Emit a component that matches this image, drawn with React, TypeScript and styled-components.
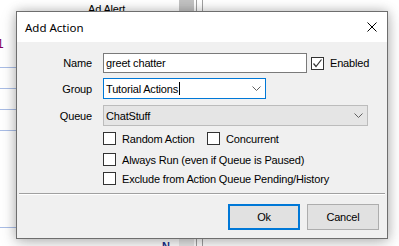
import styled, { createGlobalStyle } from 'styled-components';

const GlobalStyle = createGlobalStyle`
  html, body {
    margin: 0;
    padding: 0;
    background: #ffffff;
    overflow: hidden;
  }
  body {
    font-family: "Liberation Sans", Arial, sans-serif;
    font-size: 11px;
    letter-spacing: -0.17px;
    color: #000;
  }
`;

// Background window behind the dialog
const Page = styled.div`
  position: relative;
  width: 399px;
  height: 246px;
  overflow: hidden;
  display: flex;
  background: #fff;
`;

const ListPane = styled.div`
  width: 179px;
  display: flex;
  flex-direction: column;
`;

const ListRow = styled.div<{ $h: number; $line?: boolean }>`
  height: ${(p) => p.$h}px;
  box-sizing: border-box;
  flex-shrink: 0;
  border-bottom: ${(p) => (p.$line ? '1px solid #a9bde6' : 'none')};
`;

const HeaderText = styled.div`
  padding: 3px 0 0 88px;
  white-space: nowrap;
`;

const RowNumber = styled.div`
  margin: 22px 0 0 -3px;
  color: #800060;
  font-size: 12px;
`;

const BottomText = styled.div`
  padding: 12px 0 0 162px;
  color: #1a2f8a;
  font-weight: bold;
`;

const ScrollTrack = styled.div`
  width: 15px;
  background: #e8e8e8;
  display: flex;
  flex-direction: column;
`;

const ScrollThumb = styled.div`
  height: 120px;
  background: #c2c2c2;
`;

const Splitter = styled.div`
  width: 5px;
  margin-left: 2px;
  border-left: 1px solid #a0a0a0;
  border-right: 1px solid #a0a0a0;
`;

// Dialog
const Dialog = styled.div`
  position: absolute;
  left: 16px;
  top: 11px;
  width: 372px;
  height: 228px;
  box-sizing: border-box;
  border: 1px solid #6e6e6e;
  background: #f0f0f0;
  box-shadow: 0 0 10px rgba(0, 0, 0, 0.22), 0 4px 16px rgba(0, 0, 0, 0.18);
  display: flex;
  flex-direction: column;
`;

const TitleBar = styled.div`
  height: 30px;
  background: #fff;
  display: flex;
  align-items: center;
  justify-content: space-between;
  padding: 0 10px 0 8px;
  flex-shrink: 0;
`;

const Title = styled.span`
  font-family: "Noto Sans", "Open Sans", sans-serif;
  font-size: 11.5px;
  letter-spacing: 0;
  color: #000;
  margin-top: 1px;
`;

const CloseButton = styled.div`
  width: 10px;
  height: 10px;
  display: flex;
`;

const Body = styled.div`
  flex: 1;
  display: flex;
  flex-direction: column;
  padding: 11px 2px 0 2px;
`;

const FieldRow = styled.div<{ $mt?: number; $h: number }>`
  display: grid;
  grid-template-columns: 73px auto;
  column-gap: 11px;
  align-items: center;
  height: ${(p) => p.$h}px;
  margin-top: ${(p) => p.$mt ?? 0}px;
`;

const Label = styled.div`
  text-align: right;
`;

const FieldLine = styled.div`
  display: flex;
  align-items: center;
  height: 100%;
`;

const TextBox = styled.div<{ $w: number }>`
  width: ${(p) => p.$w}px;
  height: 100%;
  box-sizing: border-box;
  border: 1px solid #7a7a7a;
  background: #fff;
  padding-left: 2px;
  display: flex;
  align-items: center;
`;

const Combo = styled.div<{ $w: number; $focused?: boolean; $readonly?: boolean }>`
  width: ${(p) => p.$w}px;
  height: 100%;
  box-sizing: border-box;
  border: 1px solid ${(p) => (p.$focused ? '#0078d7' : '#bcbcbc')};
  background: ${(p) => (p.$readonly ? '#e5e5e5' : '#fff')};
  padding: 0 4px 0 2px;
  display: flex;
  align-items: center;
  justify-content: space-between;
`;

const ComboText = styled.span`
  display: flex;
  align-items: center;
`;

const Caret = styled.span`
  width: 1px;
  height: 13px;
  background: #000;
  margin-left: 1px;
`;

const CheckRow = styled.div<{ $mt: number }>`
  display: flex;
  align-items: center;
  height: 13px;
  margin-top: ${(p) => p.$mt}px;
  padding-left: 84px;
`;

const CheckItem = styled.label<{ $w?: number }>`
  display: flex;
  align-items: center;
  gap: 6px;
  white-space: nowrap;
  width: ${(p) => (p.$w ? `${p.$w}px` : 'auto')};
`;

const Box = styled.span`
  width: 13px;
  height: 13px;
  box-sizing: border-box;
  border: 1px solid #333;
  background: #fff;
  display: flex;
  align-items: center;
  justify-content: center;
  flex-shrink: 0;
`;

const EnabledItem = styled(CheckItem)`
  margin-left: 4px;
`;

const Separator = styled.div`
  margin-top: 8px;
  height: 1px;
  background: #a0a0a0;
  border-bottom: 1px solid #fff;
`;

const ButtonBar = styled.div`
  display: flex;
  justify-content: flex-end;
  gap: 7px;
  margin-top: 9px;
  padding-right: 6px;
`;

const Button = styled.div<{ $default?: boolean }>`
  width: 72px;
  height: 26px;
  box-sizing: border-box;
  border: ${(p) => (p.$default ? '2px solid #0078d7' : '1px solid #adadad')};
  background: #e1e1e1;
  display: flex;
  align-items: center;
  justify-content: center;
`;

const Chevron = () => (
  <svg width="9" height="5" viewBox="0 0 9 5">
    <path d="M0.5 0.5 L4.5 4.5 L8.5 0.5" fill="none" stroke="#606060" strokeWidth="1" />
  </svg>
);

const Check = ({ checked }: { checked?: boolean }) => (
  <Box>
    {checked && (
      <svg width="11" height="11" viewBox="0 0 11 11">
        <path d="M1.5 5.5 L4 8.5 L9.5 1.5" fill="none" stroke="#333" strokeWidth="1.2" />
      </svg>
    )}
  </Box>
);

export default function App() {
  return (
    <Page>
      <GlobalStyle />
      <ListPane>
        <ListRow $h={68} $line>
          <HeaderText>Ad Alert</HeaderText>
          <RowNumber>1</RowNumber>
        </ListRow>
        <ListRow $h={21} $line />
        <ListRow $h={21} $line />
        <ListRow $h={21} $line />
        <ListRow $h={97} $line />
        <ListRow $h={18}>
          <BottomText>N</BottomText>
        </ListRow>
      </ListPane>
      <ScrollTrack>
        <ScrollThumb />
      </ScrollTrack>
      <Splitter />

      <Dialog>
        <TitleBar>
          <Title>Add Action</Title>
          <CloseButton>
            <svg width="10" height="10" viewBox="0 0 10 10">
              <path d="M0.5 0.5 L9.5 9.5 M9.5 0.5 L0.5 9.5" stroke="#000" strokeWidth="1" />
            </svg>
          </CloseButton>
        </TitleBar>
        <Body>
          <FieldRow $h={20}>
            <Label>Name</Label>
            <FieldLine>
              <TextBox $w={204}>greet chatter</TextBox>
              <EnabledItem>
                <Check checked />
                Enabled
              </EnabledItem>
            </FieldLine>
          </FieldRow>
          <FieldRow $h={21} $mt={5}>
            <Label>Group</Label>
            <FieldLine>
              <Combo $w={163} $focused>
                <ComboText>
                  Tutorial Actions<Caret />
                </ComboText>
                <Chevron />
              </Combo>
            </FieldLine>
          </FieldRow>
          <FieldRow $h={21} $mt={6}>
            <Label>Queue</Label>
            <FieldLine>
              <Combo $w={265} $readonly>
                <ComboText>ChatStuff</ComboText>
                <Chevron />
              </Combo>
            </FieldLine>
          </FieldRow>
          <CheckRow $mt={6}>
            <CheckItem $w={104}>
              <Check />
              Random Action
            </CheckItem>
            <CheckItem>
              <Check />
              Concurrent
            </CheckItem>
          </CheckRow>
          <CheckRow $mt={8}>
            <CheckItem>
              <Check />
              Always Run (even if Queue is Paused)
            </CheckItem>
          </CheckRow>
          <CheckRow $mt={6}>
            <CheckItem>
              <Check />
              Exclude from Action Queue Pending/History
            </CheckItem>
          </CheckRow>
          <Separator />
          <ButtonBar>
            <Button $default>Ok</Button>
            <Button>Cancel</Button>
          </ButtonBar>
        </Body>
      </Dialog>
    </Page>
  );
}
